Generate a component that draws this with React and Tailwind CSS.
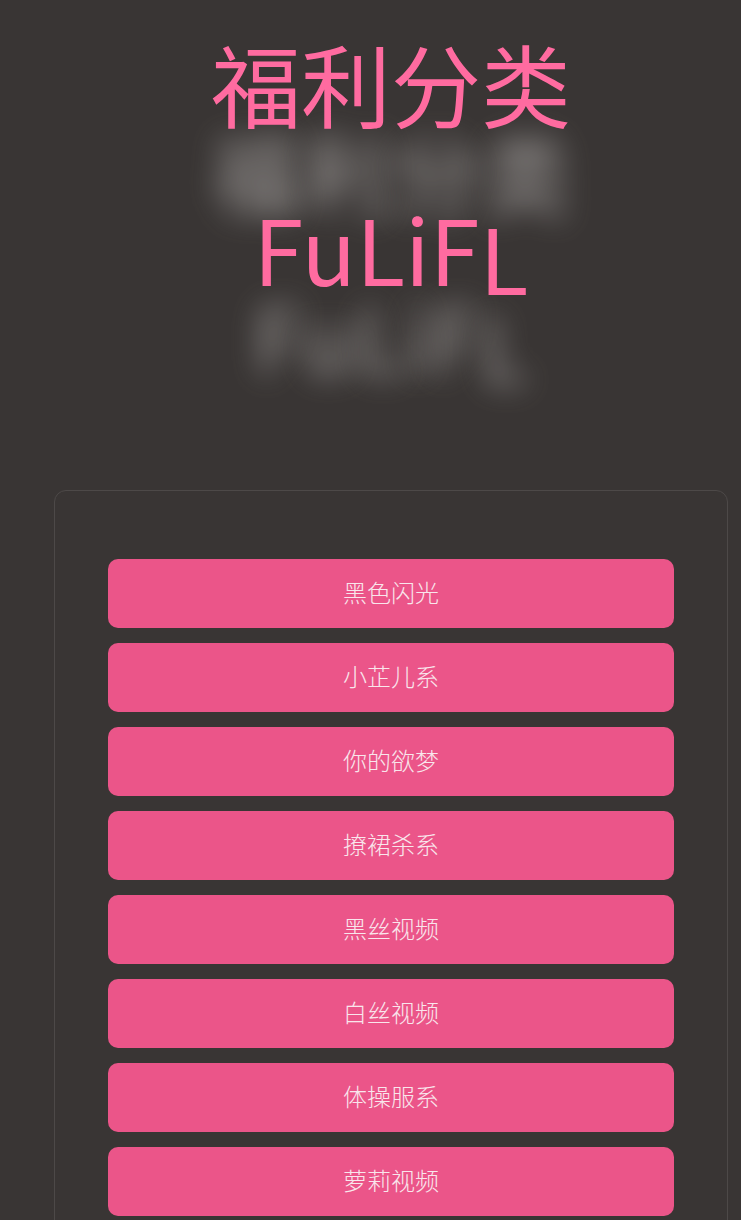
import React from "react";

const items = ["黑色闪光", "小芷儿系", "你的欲梦", "撩裙杀系", "黑丝视频", "白丝视频", "体操服系", "萝莉视频"];

const shadow = { textShadow: "0 88px 30px rgba(165,162,160,0.95)" };

export default function App() {
  return (
    <div className="min-h-[1220px] bg-[#393534] font-['Noto_Sans_CJK_SC','Noto_Sans',sans-serif] overflow-hidden">
      <div className="ml-[54px] w-[674px] text-center text-[90px] leading-[165px] text-[#ff6ba0]" style={shadow}>
        <div>福利分类</div>
        <div>
          FuLiF<span className="inline-block translate-y-[9px]">L</span>
        </div>
      </div>
      <div className="ml-[54px] mt-[160px] w-[674px] rounded-[12px] border border-[#4d4948] px-[53px] pt-[68px] pb-[40px]">
        <div className="flex flex-col gap-[15px]">
          {items.map((t) => (
            <div
              key={t}
              className="flex h-[69px] items-center justify-center rounded-[10px] bg-[#eb5589] pb-[3px] text-[24px] font-light text-[#f9e6ec]"
            >
              {t}
            </div>
          ))}
        </div>
      </div>
    </div>
  );
}
